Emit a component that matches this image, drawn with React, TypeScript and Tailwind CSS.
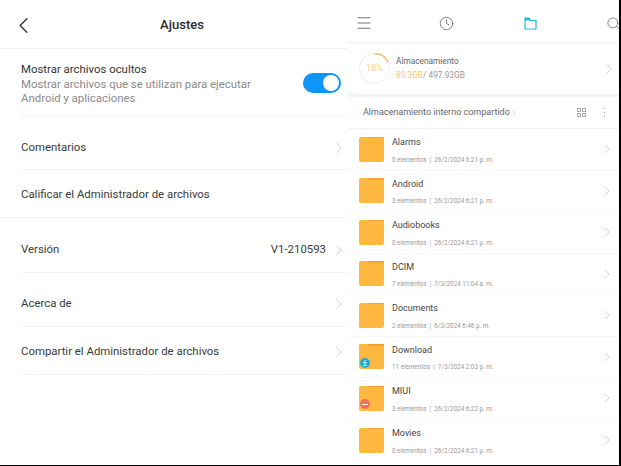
import { ChevronLeft, ChevronRight, Clock, Menu, Search } from 'lucide-react'

const settings = [
  { label: 'Comentarios', h: 'h-[52px]', chevron: true, low: true },
  { label: 'Calificar el Administrador de archivos', h: 'h-[47px]', chevron: false },
  { label: 'Versión', h: 'h-[54px]', chevron: true, value: 'V1-210593', low: true },
  { label: 'Acerca de', h: 'h-[53px]', chevron: true, low: true },
  { label: 'Compartir el Administrador de archivos', h: 'h-[47px]', chevron: true },
]

const folders = [
  { name: 'Alarms', meta: '0 elementos  |  26/2/2024 6:21 p. m.' },
  { name: 'Android', meta: '3 elementos  |  26/2/2024 6:21 p. m.' },
  { name: 'Audiobooks', meta: '0 elementos  |  26/2/2024 6:21 p. m.' },
  { name: 'DCIM', meta: '7 elementos  |  7/3/2024 11:04 a. m.' },
  { name: 'Documents', meta: '2 elementos  |  6/3/2024 6:46 p. m.' },
  { name: 'Download', meta: '11 elementos  |  7/3/2024 2:03 p. m.', badge: 'download' },
  { name: 'MIUI', meta: '3 elementos  |  26/2/2024 6:22 p. m.', badge: 'miui' },
  { name: 'Movies', meta: '0 elementos  |  26/2/2024 6:21 p. m.' },
]

const FolderIcon = ({ badge }: { badge?: string }) => (
  <div className="relative w-[24.5px] h-[25px] rounded-[2px] bg-[#ffb83f] shrink-0">
    <div className="absolute top-0 right-0 w-[16px] h-[1.5px] bg-[#f5a22e]" />
    {badge === 'download' && (
      <div className="absolute left-[1px] bottom-[1.5px] w-[10px] h-[10px] rounded-full bg-[#23a6d9] flex items-center justify-center">
        <svg width="6" height="6" viewBox="0 0 6 6" fill="none">
          <path d="M3 0v3.2M1.3 2.2 3 4l1.7-1.8M1 5.4h4" stroke="#ffffff" strokeWidth="0.9" />
        </svg>
      </div>
    )}
    {badge === 'miui' && (
      <div className="absolute left-[1px] bottom-[1.5px] w-[10px] h-[10px] rounded-full bg-[#f0705c] flex items-center justify-center">
        <div className="w-[6px] h-[1.5px] bg-white" />
      </div>
    )}
  </div>
)

const App = () => {
  return (
    <div className="w-[621px] h-[466px] overflow-hidden bg-black font-['Roboto',sans-serif]">
      <div className="flex w-[619px] h-[465px] bg-white">
        {/* Ajustes */}
        <div className="w-[348px] shrink-0">
          <div className="relative h-[49px] pl-[16px] pt-[2px] flex items-center justify-center border-b border-[#f2f2f2]">
            <ChevronLeft className="absolute left-[9.5px] top-[11.5px] text-[#333]" size={27} strokeWidth={1.2} />
            <span className="text-[13px] font-medium text-[#2b2b2b]">Ajustes</span>
          </div>
          <div className="h-[67px] pl-[21px] pr-[7px] flex items-center justify-between">
            <div className="w-[260px] text-[11.4px] leading-[14px] pt-[2px]">
              <div className="text-[#333] mb-[1px]">Mostrar archivos ocultos</div>
              <div className="text-[#8a8a8a]">Mostrar archivos que se utilizan para ejecutar Android y aplicaciones</div>
            </div>
            <div className="w-[38px] h-[20px] rounded-full bg-[#0d95f8] flex items-center justify-end pr-[2px] mt-[1px]">
              <div className="w-[16px] h-[16px] rounded-full bg-white" />
            </div>
          </div>
          {settings.map((s, i) => (
            <div key={s.label}>
              <div className={i === 2 ? 'h-px bg-[#f4f4f4]' : 'h-px bg-[#f4f4f4] ml-[21px]'} />
              <div className={`${s.h} ${s.low ? 'pt-[9px]' : 'pt-[2px]'} pl-[21px] flex items-center justify-between`}>
                <span className="text-[11.4px] text-[#3a3a3a]">{s.label}</span>
                <div className="flex items-center gap-[4px]">
                  {s.value && <span className="text-[11.4px] text-[#3a3a3a]">{s.value}</span>}
                  {s.chevron && <ChevronRight className="text-[#c4c4c4]" size={18} strokeWidth={1.1} />}
                </div>
              </div>
            </div>
          ))}
          <div className="h-px bg-[#f4f4f4] ml-[21px]" />
        </div>

        {/* Archivos */}
        <div className="flex-1 min-w-0">
          <div className="h-[43px] pl-[7px] pt-[4px] flex items-center border-b border-[#f2f2f2] overflow-hidden">
            <Menu className="text-[#555] shrink-0" size={18} strokeWidth={1.1} />
            <Clock className="text-[#666] ml-[65.5px] shrink-0" size={15} strokeWidth={1.3} />
            <svg className="ml-[70px] shrink-0" width="13" height="13" viewBox="0 0 13 13" fill="none">
              <path d="M1 1h4l1.5 2.5H12V12H1z" stroke="#2cb6d6" strokeWidth="1.2" />
              <path d="M1 1h4l1.5 2.5H1z" fill="#2cb6d6" />
            </svg>
            <Search className="text-[#666] ml-[69px] shrink-0" size={15} strokeWidth={1.2} />
          </div>

          <div className="h-[51px] pl-[11px] pr-[2px] flex items-center">
            <div className="relative w-[31px] h-[31px] shrink-0">
              <svg width="31" height="31" viewBox="0 0 31 31" fill="none">
                <circle cx="15.5" cy="15.5" r="15" stroke="#eeeeee" strokeWidth="1" />
                <path d="M15.5 .5A15 15 0 0 1 29 9.2" stroke="#f6c163" strokeWidth="1.5" />
              </svg>
              <span className="absolute inset-0 flex items-center justify-center text-[9.5px] text-[#f6d595]">18%</span>
            </div>
            <div className="ml-[6px] flex-1 leading-[13px]">
              <div className="text-[8.3px] text-[#666]">Almacenamiento</div>
              <div className="text-[8.3px] text-[#999] mt-[1px]">
                <span className="text-[#f3c877]">89.3GB</span>/ 497.93GB
              </div>
            </div>
            <ChevronRight className="text-[#c4c4c4]" size={16} strokeWidth={1.1} />
          </div>

          <div className="h-[3px] bg-[#f3f3f3]" />

          <div className="h-[32px] pl-[15px] pr-[12px] flex items-center border-b border-[#f2f2f2]">
            <span className="text-[9px] text-[#666]">Almacenamiento interno compartido</span>
            <ChevronRight className="text-[#bbb] ml-[-1px]" size={10} strokeWidth={1.3} />
            <div className="ml-auto flex items-center gap-[18px]">
              <div className="grid grid-cols-2 gap-[1px]">
                <div className="w-[4px] h-[4px] border border-[#aaa]" />
                <div className="w-[4px] h-[4px] border border-[#aaa]" />
                <div className="w-[4px] h-[4px] border border-[#aaa]" />
                <div className="w-[4px] h-[4px] border border-[#aaa]" />
              </div>
              <div className="flex flex-col gap-[2.5px] mr-[2px]">
                <div className="w-[1.5px] h-[1.5px] rounded-full bg-[#888]" />
                <div className="w-[1.5px] h-[1.5px] rounded-full bg-[#888]" />
                <div className="w-[1.5px] h-[1.5px] rounded-full bg-[#888]" />
              </div>
            </div>
          </div>

          {folders.map((f) => (
            <div key={f.name} className="h-[41.5px] pl-[11px] pr-[4px] flex items-center border-b border-[#f6f6f6] last:border-b-0">
              <FolderIcon badge={f.badge} />
              <div className="ml-[8.5px] flex-1 min-w-0 pt-[2px]">
                <div className="text-[9px] leading-[12px] text-[#444]">{f.name}</div>
                <div className="text-[6.3px] leading-[9px] mt-[7.5px] text-[#999] whitespace-pre">{f.meta}</div>
              </div>
              <ChevronRight className="text-[#c4c4c4]" size={16} strokeWidth={1.1} />
            </div>
          ))}
        </div>
      </div>
    </div>
  )
}

export default App
